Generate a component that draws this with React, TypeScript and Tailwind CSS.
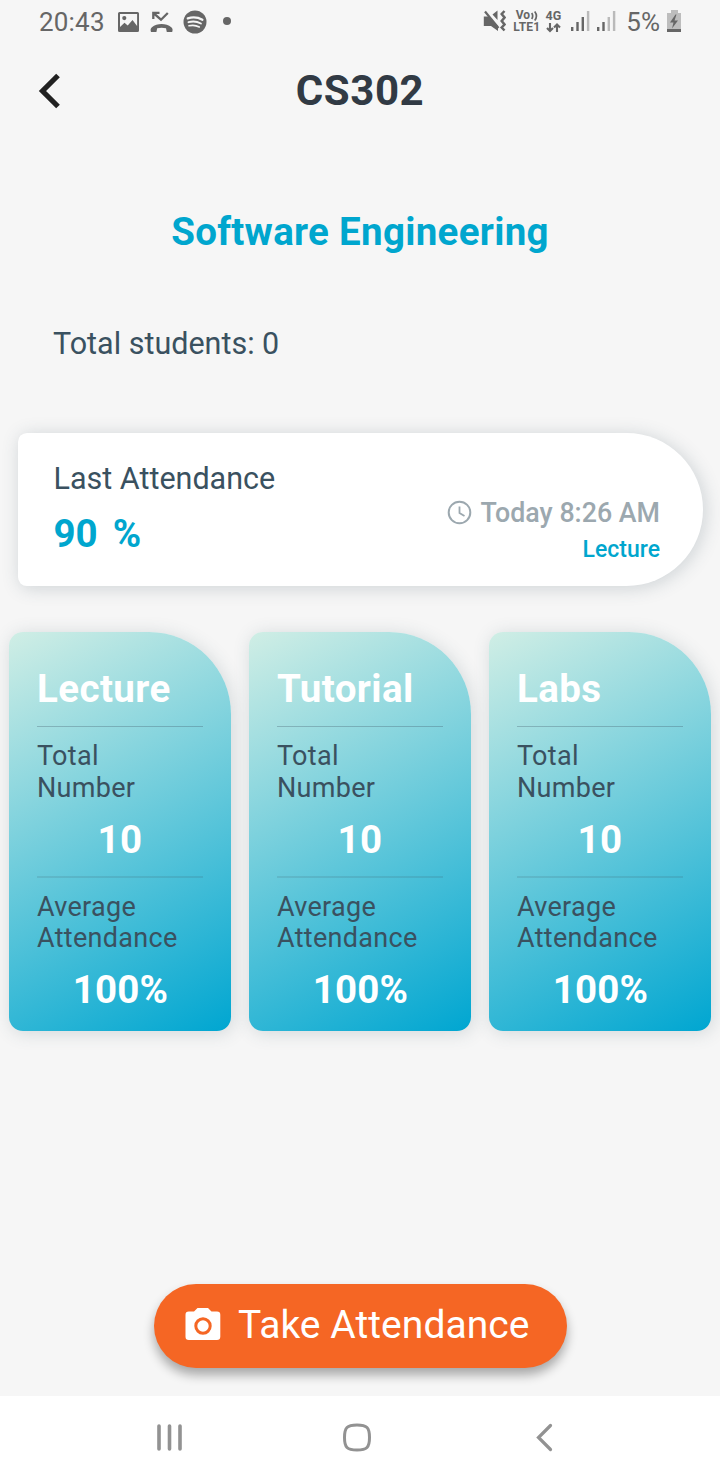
import React from "react";

const cards = ["Lecture", "Tutorial", "Labs"];

function StatusBar() {
  return (
    <div className="flex h-11 items-center justify-between pl-[39px] pr-[38px] text-[#666666]">
      <div className="flex items-center">
        <span className="w-[79px] whitespace-nowrap text-[26px] leading-[44px] tracking-[0.2px]">20:43</span>
        <svg width="22" height="22" viewBox="0 0 22 22" fill="currentColor">
          <path fillRule="evenodd" d="M1.500 1h18a1.500 1.500 0 0 1 1.500 1.500v17a1.500 1.500 0 0 1-1.500 1.500h-18A1.500 1.500 0 0 1 0 19.500V2.500A1.500 1.500 0 0 1 1.500 1ZM2 2.900v13.200l4.500-4.300 3.200 2.800L14.500 9l4.600 6V2.900ZM6.300 5a2.100 2.100 0 1 1 0 4.200 2.100 2.100 0 0 1 0-4.200Z" />
        </svg>
        <svg className="mb-px ml-[10px]" width="23" height="22" viewBox="0 0 23 22" fill="none" stroke="currentColor">
          <path d="M3.300 8V1.800H9.500M3.800 2.300l7.200 6.400L17.800 2" strokeWidth="2.300" />
          <path d="M1 21c-.7-1.800-.5-3.600.9-4.700 5.200-4.400 14.200-4.400 19.400 0 1.400 1.100 1.600 2.900.9 4.700h-5.400l-.8-3.700c-2.900-.9-5.900-.9-8.800 0L6.400 21Z" fill="currentColor" stroke="none" />
        </svg>
        <svg className="mb-px ml-[9.500px]" width="24" height="24" viewBox="0 0 24 24" fill="currentColor">
          <circle cx="12" cy="12" r="11.500" />
          <g fill="none" stroke="#f6f6f6" strokeLinecap="round">
            <path d="M4.800 8.300c5-1.500 10.300-1 14.600 1.400" strokeWidth="2.300" />
            <path d="M5.500 12.200c4.300-1.200 8.700-.7 12.400 1.300" strokeWidth="1.900" />
            <path d="M6 15.800c3.700-.9 7.200-.5 10.300 1.200" strokeWidth="1.600" />
          </g>
        </svg>
        <span className="ml-[16.500px] mt-[-2px] size-2 rounded-full bg-[#666666]" />
      </div>
      <div className="flex items-center">
        <svg className="mb-0.5" width="23" height="24" viewBox="0 0 23 24" fill="none" stroke="currentColor">
          <path d="M.8 7.500h5L15 17v5l-7-5H.8ZM9.500 5.500 14.500 1.500v9.500Z" fill="currentColor" stroke="none" />
          <path d="M2 2.500 15.500 19" strokeWidth="2.200" />
          <path d="M21.500 2 18.700 5l2.800 3.500-2.800 3.500 2.800 3.500-2.800 3 2.800 3" strokeWidth="2.500" />
        </svg>
        <div className="ml-[7px] mt-[-1px] flex w-[28px] flex-col items-center whitespace-nowrap text-[12px] font-bold leading-[11.500px]">
          <span className="flex items-center gap-px">
            <span>Vo</span>
            <svg width="7" height="10" viewBox="0 0 7 10" fill="none" stroke="currentColor" strokeWidth="1.700">
              <path d="M.7 2c1.300 2 1.300 4 0 6M3.700.5c2.300 3 2.300 6 0 9" />
            </svg>
          </span>
          <span className="tracking-[0.2px]">LTE1</span>
        </div>
        <div className="ml-[4px] mt-[-1px] flex w-[17px] flex-col items-center">
          <span className="text-[12.500px] font-bold leading-[12px]">4G</span>
          <svg width="15" height="11" viewBox="0 0 15 11" fill="none" stroke="currentColor" strokeWidth="2.100">
            <path d="M4 1v8M1 6l3 3 3-3M11 10V3M8 5.500l3-3 3 3" />
          </svg>
        </div>
        <svg className="mb-0.5 ml-[9.500px]" width="45" height="22" viewBox="0 0 45 22" fill="currentColor">
          <path d="M0 17h2.400v4H0ZM5.300 12h2.400v9H5.300ZM10.600 7h2.400v14h-2.400ZM26 17h2.400v4H26ZM31.300 12h2.400v9h-2.400Z" />
          <path d="M15.900 1h2.400v20h-2.400ZM36.600 7h2.400v14h-2.400ZM41.900 1h2.400v20h-2.400Z" opacity=".42" />
        </svg>
        <span className="ml-[10px] whitespace-nowrap text-[26px] leading-[44px]">5%</span>
        <svg className="mb-[3px] ml-[7px]" width="15" height="24" viewBox="0 0 15 24">
          <path d="M4 1h7v3h3v19H0V4h4Z" fill="#bdbdbd" />
          <path d="M0 20h14v3H0Z" fill="#666" />
          <path d="M8.500 5.500 3 13.500h3.500L5 19.500l6-8H7.500l2-6Z" fill="#666" />
        </svg>
      </div>
    </div>
  );
}

function StatCard({ title }: { title: string }) {
  return (
    <section className="h-[399px] w-[222px] rounded-[14px] rounded-tr-[82px] bg-[linear-gradient(152deg,#d0eee5_0%,#00a6d1_100%)] px-7 pt-[34px] text-[#3a5160] shadow-[2px_2px_18px_rgba(58,81,96,0.18)]">
      <h2 className="h-[60px] text-[38.500px] font-bold leading-[46px] tracking-[0.4px] text-white">{title}</h2>
      <hr className="border-t border-[#3a5160]/30" />
      <p className="pt-[14px] text-[27px] leading-[31.500px] tracking-[0.3px]">Total<br />Number</p>
      <p className="pt-[13px] text-center text-[38.500px] font-bold leading-[46px] tracking-[0.3px] text-white">10</p>
      <hr className="mt-[13px] border-t-2 border-[#3a5160]/15" />
      <p className="pt-[14px] text-[27px] leading-[31px] tracking-[0.3px]">Average<br />Attendance</p>
      <p className="pl-px pt-[13px] text-center text-[38.500px] font-bold leading-[46px] tracking-[0.2px] text-white">100%</p>
    </section>
  );
}

export default function App() {
  return (
    <div className="flex h-[1480px] w-[720px] flex-col overflow-hidden bg-[#f6f6f6] font-[Roboto,sans-serif]">
      <StatusBar />
      <header className="grid h-[94px] grid-cols-[1fr_auto_1fr] items-center">
        <button aria-label="Back" className="ml-[37px] w-6">
          <svg width="24" height="36" viewBox="0 0 24 36" fill="none" stroke="#212121" strokeWidth="5.200">
            <path d="M21 2.500 5.500 18 21 33.500" />
          </svg>
        </button>
        <h1 className="text-[42px] font-bold leading-[50px] tracking-[0.6px] text-[#313a44]">CS302</h1>
      </header>
      <h2 className="mt-[70px] text-center text-[38.500px] font-bold leading-[48px] tracking-[0.3px] text-[#00a6ce]">Software Engineering</h2>
      <p className="mt-[68px] pl-[53px] text-[30.500px] leading-[40px] text-[#3a5160]">Total students: 0</p>
      <section className="ml-[17.500px] mt-[69px] flex h-[153px] w-[685px] shrink-0 justify-between rounded-[9px] rounded-r-[77px] bg-white pl-[36px] pr-[42.500px] shadow-[2px_2px_18px_rgba(58,81,96,0.22)]">
        <div className="pt-[26px]">
          <p className="text-[30.500px] leading-[40px] text-[#3a5160]">Last Attendance</p>
          <p className="mt-[12px] flex gap-[15px] text-[38.500px] font-bold leading-[46px] text-[#00a6ce]"><span>90</span><span>%</span></p>
        </div>
        <div className="flex flex-col items-end pt-[62px] font-medium">
          <div className="flex items-center gap-[9px] text-[26.800px] leading-[36px] text-[#9ca8af]">
            <svg className="mb-px" width="25" height="25" viewBox="0 0 25 25" fill="none" stroke="currentColor" strokeWidth="2">
              <circle cx="12.500" cy="12.500" r="10.800" /><path d="M12.500 6.500V13l5 3" strokeWidth="1.800" />
            </svg>
            <span>Today 8:26 AM</span>
          </div>
          <p className="mt-[3px] text-[23px] leading-8 text-[#00a6ce]">Lecture</p>
        </div>
      </section>
      <main className="mt-[46px] flex shrink-0 justify-center gap-[18px]">
        {cards.map((title) => <StatCard key={title} title={title} />)}
      </main>
      <button className="mb-[28px] mt-auto flex h-[84px] w-[413px] shrink-0 items-center self-center rounded-full bg-[#f56624] pb-[2px] pl-[31px] text-white shadow-[0_7px_11px_rgba(0,0,0,0.32)]">
        <svg className="mb-[3px]" width="36" height="34" viewBox="0 0 36 34">
          <path fill="currentColor" d="M12.500 1h10.500l3.500 3.500h5.500a3.300 3.300 0 0 1 3.300 3.300v22a3.300 3.300 0 0 1-3.300 3.200H3.800a3.300 3.300 0 0 1-3.300-3.300V7.800a3.300 3.300 0 0 1 3.300-3.300H9Z" />
          <circle cx="18" cy="19" r="7.200" fill="none" stroke="#f56624" strokeWidth="3" />
        </svg>
        <span className="ml-[17.500px] whitespace-nowrap text-[39px] leading-[50px] tracking-[0.05px]">Take Attendance</span>
      </button>
      <nav className="flex h-[84px] shrink-0 items-center bg-white pl-[156px] text-[#929292]">
        <svg width="28" height="30" viewBox="0 0 28 30" stroke="currentColor" strokeWidth="3.600" strokeLinecap="round">
          <path d="M3 3v23M13.500 3v23M24 3v23" />
        </svg>
        <svg className="ml-[157.500px]" width="30" height="30" viewBox="0 0 30 30" fill="none" stroke="currentColor" strokeWidth="3">
          <path d="M15 2c10 0 12.500 2.500 12.500 12.500S25 27 15 27 2.500 24.500 2.500 14.500 5 2 15 2Z" />
        </svg>
        <svg className="ml-[163.500px]" width="18" height="30" viewBox="0 0 18 30" fill="none" stroke="currentColor" strokeWidth="3.200" strokeLinecap="round">
          <path d="M15.500 2.500 3.500 14.500l12 12" />
        </svg>
      </nav>
    </div>
  );
}
